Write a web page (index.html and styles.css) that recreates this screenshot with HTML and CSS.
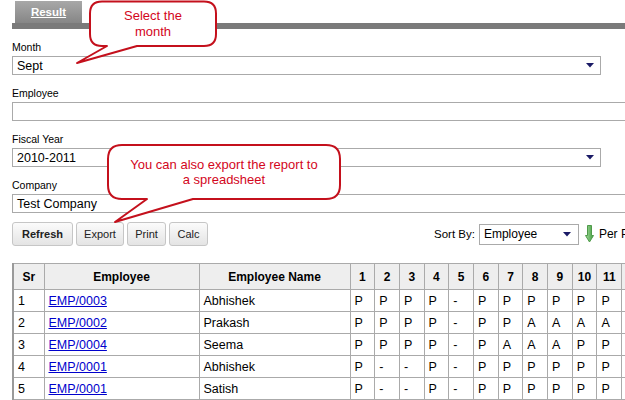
FILE: index.html
```html
<!DOCTYPE html>
<html>
<head>
<meta charset="utf-8">
<title>Result</title>
<link rel="stylesheet" href="styles.css">
</head>
<body>
<div class="page">
  <div class="tabs"><div class="tab">Result</div></div>
  <div class="tabbar"></div>

  <div class="form">
    <div class="field">
      <div class="label">Month</div>
      <div class="select wide"><span>Sept</span><svg class="caret" width="8" height="5" viewBox="0 0 8 5"><polygon points="0,0 8,0 4,4.5"/></svg></div>
    </div>
    <div class="field">
      <div class="label">Employee</div>
      <div class="input"></div>
    </div>
    <div class="field">
      <div class="label">Fiscal Year</div>
      <div class="select wide"><span>2010-2011</span><svg class="caret" width="8" height="5" viewBox="0 0 8 5"><polygon points="0,0 8,0 4,4.5"/></svg></div>
    </div>
    <div class="field">
      <div class="label">Company</div>
      <div class="input"><span>Test Company</span></div>
    </div>
  </div>

  <div class="toolbar">
    <div class="buttons">
      <div class="btn btn-refresh">Refresh</div>
      <div class="btn btn-export">Export</div>
      <div class="btn btn-small">Print</div>
      <div class="btn btn-small">Calc</div>
    </div>
    <div class="sort">
      <span class="sort-label">Sort By:</span>
      <div class="select sort-select"><span>Employee</span><svg class="caret" width="8" height="5" viewBox="0 0 8 5"><polygon points="0,0 8,0 4,4.5"/></svg></div>
      <svg class="sort-arrow" width="9" height="18" viewBox="0 0 9 18">
        <defs><linearGradient id="g" x1="0" x2="1" y1="0" y2="0"><stop offset="0" stop-color="#a6dca0"/><stop offset="1" stop-color="#3e9a3a"/></linearGradient></defs>
        <path d="M2.5,0.5 H6.5 V10.5 H8.5 L4.5,17 L0.5,10.5 H2.5 Z" fill="url(#g)" stroke="#4f9a4a" stroke-width="1"/>
      </svg>
      <span class="per-page">Per Page:</span>
    </div>
  </div>

  <table class="grid">
    <colgroup>
      <col class="c-sr"><col class="c-emp"><col class="c-name">
      <col class="c-day"><col class="c-day"><col class="c-day"><col class="c-day"><col class="c-day"><col class="c-day"><col class="c-day"><col class="c-day"><col class="c-day"><col class="c-day"><col class="c-day"><col class="c-day"><col class="c-day"><col class="c-day">
    </colgroup>
    <thead>
      <tr><th>Sr</th><th>Employee</th><th>Employee Name</th><th>1</th><th>2</th><th>3</th><th>4</th><th>5</th><th>6</th><th>7</th><th>8</th><th>9</th><th>10</th><th>11</th><th>12</th><th>13</th><th>14</th></tr>
    </thead>
    <tbody>
      <tr><td>1</td><td><a href="#">EMP/0003</a></td><td>Abhishek</td><td>P</td><td>P</td><td>P</td><td>P</td><td>-</td><td>P</td><td>P</td><td>P</td><td>P</td><td>P</td><td>P</td><td>-</td><td>P</td><td>P</td></tr>
      <tr><td>2</td><td><a href="#">EMP/0002</a></td><td>Prakash</td><td>P</td><td>P</td><td>P</td><td>P</td><td>-</td><td>P</td><td>P</td><td>A</td><td>A</td><td>A</td><td>A</td><td>-</td><td>P</td><td>P</td></tr>
      <tr><td>3</td><td><a href="#">EMP/0004</a></td><td>Seema</td><td>P</td><td>P</td><td>P</td><td>P</td><td>-</td><td>P</td><td>A</td><td>A</td><td>A</td><td>P</td><td>P</td><td>-</td><td>P</td><td>P</td></tr>
      <tr><td>4</td><td><a href="#">EMP/0001</a></td><td>Abhishek</td><td>P</td><td>-</td><td>-</td><td>P</td><td>-</td><td>P</td><td>P</td><td>P</td><td>P</td><td>P</td><td>P</td><td>-</td><td>P</td><td>P</td></tr>
      <tr><td>5</td><td><a href="#">EMP/0001</a></td><td>Satish</td><td>P</td><td>-</td><td>-</td><td>P</td><td>-</td><td>P</td><td>P</td><td>P</td><td>P</td><td>P</td><td>P</td><td>-</td><td>P</td><td>P</td></tr>
    </tbody>
  </table>
</div>

<div class="callout callout-month">
  <svg class="bubble" width="145" height="66" viewBox="0 0 145 66">
    <path d="M27,1.5 H129 Q141,1.5 141,13.5 V34 Q141,46 129,46 H62 L2,63 L32,46 H27 Q15,46 15,34 V13.5 Q15,1.5 27,1.5 Z"/>
  </svg>
  <div class="callout-text">Select the<br>month</div>
</div>

<div class="callout callout-export">
  <svg class="bubble" width="245" height="85" viewBox="0 0 245 85">
    <path d="M22,5 H226 Q240,5 240,19 V45 Q240,59 226,59 H93 L15,82 L47,59 H22 Q8,59 8,45 V19 Q8,5 22,5 Z"/>
  </svg>
  <div class="callout-text">You can also export the report to<br>a spreadsheet</div>
</div>
</body>
</html>
```

FILE: styles.css
```css
html, body {
  margin: 0;
  padding: 0;
}

body {
  position: relative;
  width: 625px;
  height: 400px;
  overflow: hidden;
  background: #ffffff;
  color: #000000;
  font-family: "Liberation Sans", Arial, sans-serif;
}

.page {
  width: 700px;
  padding: 1px 0 0 12px;
}

/* tab strip */
.tabs {
  display: flex;
  padding-left: 3px;
}

.tab {
  width: 67px;
  height: 22px;
  display: flex;
  align-items: center;
  justify-content: center;
  background: linear-gradient(#a8a8a8, #868686);
  color: #ffffff;
  font-size: 11.5px;
  font-weight: bold;
  text-decoration: underline;
}

.tabbar {
  height: 6px;
  background: #7a7a7a;
}

/* form */
.form {
  padding-top: 9px;
}

.field {
  margin-bottom: 9px;
}

.label {
  font-size: 10.5px;
  line-height: 14px;
  padding-top: 2px;
  margin-bottom: 2px;
}

.select,
.input {
  box-sizing: border-box;
  height: 19px;
  border: 1px solid #aaaaaa;
  background: #ffffff;
  display: flex;
  align-items: center;
  padding-left: 4px;
  font-size: 12.5px;
}

.select {
  justify-content: space-between;
  padding-right: 6px;
}

.select.wide {
  width: 589px;
}

.input {
  width: 640px;
}

.caret {
  fill: #1a1a66;
  display: block;
}

/* toolbar */
.toolbar {
  display: flex;
  align-items: center;
  margin-top: 1px;
  height: 24px;
}

.buttons {
  display: flex;
  gap: 3px;
}

.btn {
  box-sizing: border-box;
  height: 24px;
  display: flex;
  align-items: center;
  justify-content: center;
  border: 1px solid #c6c6c6;
  border-radius: 3px;
  background: linear-gradient(#fbfbfb, #e4e4e4);
  color: #222222;
  font-size: 11px;
}

.btn-refresh {
  width: 61px;
  font-weight: bold;
}

.btn-export {
  width: 48px;
}

.btn-small {
  width: 39px;
}

.sort {
  display: flex;
  align-items: center;
  margin-left: 226px;
  white-space: nowrap;
}

.sort-label {
  font-size: 11.5px;
  margin-right: 4px;
}

.sort-select {
  width: 100px;
  height: 21px;
  font-size: 12px;
  padding-right: 7px;
}

.sort-arrow {
  display: block;
  margin-left: 6px;
}

.per-page {
  margin-left: 5px;
  font-size: 12px;
}

/* grid */
.grid {
  margin-top: 17px;
  border-collapse: collapse;
  table-layout: fixed;
  width: 683px;
  font-size: 12.5px;
  border-left: 2px solid #9a9a9a;
}

.c-sr { width: 31px; }
.c-emp { width: 155px; }
.c-name { width: 151px; }
.c-day { width: 24.7px; }

.grid th,
.grid td {
  border: 1px solid #aaaaaa;
  padding: 0 3px;
  white-space: nowrap;
  overflow: hidden;
}

.grid thead tr {
  height: 26px;
}

.grid tbody tr {
  height: 22px;
}

.grid th {
  background: #eeeeee;
  font-size: 12px;
  font-weight: bold;
  text-align: center;
}

.grid td {
  padding-left: 4px;
}

.grid a {
  color: #0000cc;
  text-decoration: underline;
}

/* callouts */
.callout {
  position: absolute;
  pointer-events: none;
}

.bubble {
  position: absolute;
  left: 0;
  top: 0;
  display: block;
}

.bubble path {
  fill: #ffffff;
  stroke: #c4101c;
  stroke-width: 2;
  stroke-linejoin: round;
}

.callout-text {
  position: absolute;
  display: flex;
  align-items: center;
  justify-content: center;
  text-align: center;
  color: #d3061c;
  font-size: 13px;
}

.callout-month {
  left: 75px;
  top: 0;
  width: 145px;
  height: 66px;
}

.callout-month .callout-text {
  left: 15px;
  top: 1px;
  width: 126px;
  height: 45px;
  line-height: 16px;
}

.callout-export {
  left: 100px;
  top: 140px;
  width: 245px;
  height: 85px;
}

.callout-export .callout-text {
  left: 8px;
  top: 5px;
  width: 232px;
  height: 54px;
  line-height: 15.5px;
}
```
